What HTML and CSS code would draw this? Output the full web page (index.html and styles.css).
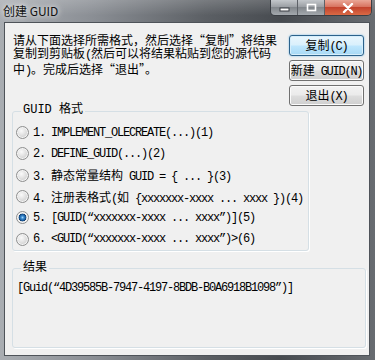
FILE: index.html
```html
<!DOCTYPE html>
<html lang="zh-CN">
<head>
    <meta charset="UTF-8">
    <title>创建 GUID</title>
    <link rel="stylesheet" href="styles.css">
</head>
<body>
    <div class="window">
        <!-- Title bar -->
        <div class="titlebar">
            <span class="title">创建 GUID</span>
            <div class="caption-btns">
                <span class="cap min">
                    <svg width="11" height="9" viewBox="0 0 11 9"><rect x="1" y="5" width="9" height="3" fill="#fff" stroke="#3a3e44" stroke-width="1"/></svg>
                </span>
                <span class="cap max">
                    <svg width="11" height="9" viewBox="0 0 11 9"><rect x="1.5" y="1.5" width="8" height="6" fill="none" stroke="#fff" stroke-width="1.6"/></svg>
                </span>
                <span class="cap close">
                    <svg width="12" height="10" viewBox="0 0 12 10"><path d="M2 1 L10 9 M10 1 L2 9" stroke="#fff" stroke-width="2.4" stroke-linecap="round"/></svg>
                </span>
            </div>
        </div>

        <div class="client">
            <!-- Instructions and buttons -->
            <div class="top">
                <p class="intro">请从下面选择所需格式，然后选择“复制”将结果<br>复制到剪贴板<span class="half">(</span>然后可以将结果粘贴到您的源代码<br>中<span class="half">)</span>。完成后选择“退出”。</p>
                <div class="buttons">
                    <button class="btn default"><span class="cn">复制</span>(C)</button>
                    <button class="btn"><span class="cn">新建</span> GUID(N)</button>
                    <button class="btn"><span class="cn">退出</span>(X)</button>
                </div>
            </div>

            <!-- Format choices -->
            <fieldset class="group formats">
                <legend>GUID <span class="cn">格式</span></legend>
                <label class="option"><span class="radio"></span><span class="label">1. IMPLEMENT_OLECREATE(...)(1)</span></label>
                <label class="option"><span class="radio"></span><span class="label">2. DEFINE_GUID(...)(2)</span></label>
                <label class="option"><span class="radio"></span><span class="label">3. <span class="cn">静态常量结构</span> GUID = { ... }(3)</span></label>
                <label class="option"><span class="radio"></span><span class="label">4. <span class="cn">注册表格式</span>(<span class="cn">如</span> {xxxxxxx-xxxx ... xxxx })(4)</span></label>
                <label class="option"><span class="radio checked"></span><span class="label">5. [GUID(“xxxxxxx-xxxx ... xxxx”)](5)</span></label>
                <label class="option"><span class="radio"></span><span class="label">6. &lt;GUID(“xxxxxxx-xxxx ... xxxx”)&gt;(6)</span></label>
            </fieldset>

            <!-- Result -->
            <fieldset class="group result">
                <legend><span class="cn">结果</span></legend>
                <div class="result-text">[Guid(“4D39585B-7947-4197-8BDB-B0A6918B1098”)]</div>
            </fieldset>
        </div>
    </div>
</body>
</html>
```

FILE: styles.css
```css
/* Global styles */
body {
    margin: 0;
    padding: 0;
    background: #fff;
}

/* Window frame */
.window {
    width: 375px;
    height: 360px;
    display: flex;
    flex-direction: column;
    overflow: hidden;
    background: linear-gradient(90deg, #a9adb2 0%, #8a8e94 25%, #5b5f64 55%, #474b50 75%, #686c71 100%);
}

.titlebar {
    height: 22px;
    display: flex;
    align-items: flex-start;
    background: linear-gradient(rgba(255, 255, 255, 0.18), rgba(255, 255, 255, 0) 70%);
}

.title {
    padding: 4px 0 0 3px;
    font-family: "Noto Sans CJK SC", sans-serif;
    font-size: 12px;
    line-height: 14px;
    color: #111;
    text-shadow: 0 0 5px rgba(255, 255, 255, 0.9), 0 0 8px rgba(255, 255, 255, 0.6);
}

.caption-btns {
    margin-left: auto;
    margin-right: 3px;
    display: flex;
    border: 1px solid #3a3e44;
    border-top: none;
    border-radius: 0 0 5px 5px;
    overflow: hidden;
    height: 15px;
}

.cap {
    width: 26px;
    display: flex;
    align-items: center;
    justify-content: center;
    background: linear-gradient(#c3c7cb, #9ca0a5 45%, #82878c 50%, #a4a9ae);
    border-left: 1px solid #5d6167;
}

.cap.min {
    border-left: none;
}

.cap.close {
    width: 46px;
    background: linear-gradient(#eaa797, #d87460 45%, #c3432d 50%, #da6a45);
}

/* Client area */
.client {
    flex: 1;
    margin: 0 5px 4px 4px;
    border: 1px solid #4e5359;
    background: #f0f0f0;
    font-family: "Liberation Mono", "Noto Sans CJK SC", monospace;
    font-size: 12px;
    color: #000;
}

.cn {
    font-family: "Noto Sans CJK SC", sans-serif;
    letter-spacing: 0;
}

.half {
    font-family: "Liberation Mono", monospace;
    letter-spacing: -1.2px;
}

.top {
    display: flex;
    padding: 10px 5px 0 8px;
}

.intro {
    flex: 1;
    margin: 0;
    font-family: "Noto Sans CJK SC", sans-serif;
    line-height: 13px;
}

/* Buttons */
.buttons {
    width: 75px;
    margin-top: 2px;
    display: flex;
    flex-direction: column;
    gap: 4px;
}

.btn {
    height: 21px;
    padding: 0;
    border: 1px solid #707070;
    border-radius: 3px;
    background: linear-gradient(#f2f2f2 0%, #ebebeb 48%, #dddddd 52%, #cfcfcf 100%);
    box-shadow: inset 0 0 0 1px #fbfbfb;
    font-family: "Liberation Mono", "Noto Sans CJK SC", monospace;
    font-size: 12px;
    letter-spacing: -1.25px;
    line-height: 17px;
    color: #000;
    white-space: nowrap;
}

.btn.default {
    border-color: #2c628b;
    background: linear-gradient(#eaf6fd 0%, #d9f0fc 48%, #bee6fd 52%, #a7d9f5 100%);
    box-shadow: inset 0 0 0 1px #d6eefb, 0 0 2px #6fb8e6;
}

/* Group boxes */
.group {
    margin: 0 0 0 7px;
    border: 1px solid #d5dfe5;
    border-radius: 3px;
    box-shadow: 1px 1px 0 #fff;
    min-width: 0;
}

.group legend {
    padding: 0 2px 4px;
    line-height: 12px;
}

.formats {
    width: 297px;
    box-sizing: border-box;
    margin-top: -4px;
    padding: 2px 0 0 3px;
}

.formats legend {
    margin-left: 5px;
}

.option {
    height: 21.33px;
    display: flex;
    align-items: center;
    white-space: nowrap;
}

.label {
    letter-spacing: -1.2px;
}

.radio {
    width: 13px;
    height: 13px;
    flex: none;
    box-sizing: border-box;
    margin-right: 4px;
    border-radius: 50%;
    border: 1px solid #8e8f8f;
    background: radial-gradient(circle at 40% 35%, #fafafa 0, #e4e4e4 40%, #cfcfcf 75%, #ececec 100%);
    box-shadow: inset 0 0 0 1px #f4f4f4;
}

.radio.checked {
    background: radial-gradient(circle at 50% 50%, #9fd6f7 0, #3b8ad0 1.5px, #1a5b9c 3px, #123f70 3.6px, #e8e8e8 4.2px, #f6f6f6 100%);
}

.result {
    width: 354px;
    box-sizing: border-box;
    margin-top: 9px;
    padding: 0 0 0 4px;
}

.result legend {
    margin-left: 4px;
}

.result-text {
    height: 66px;
    padding-top: 3px;
    line-height: 14px;
    letter-spacing: -1.2px;
    white-space: nowrap;
}
```
